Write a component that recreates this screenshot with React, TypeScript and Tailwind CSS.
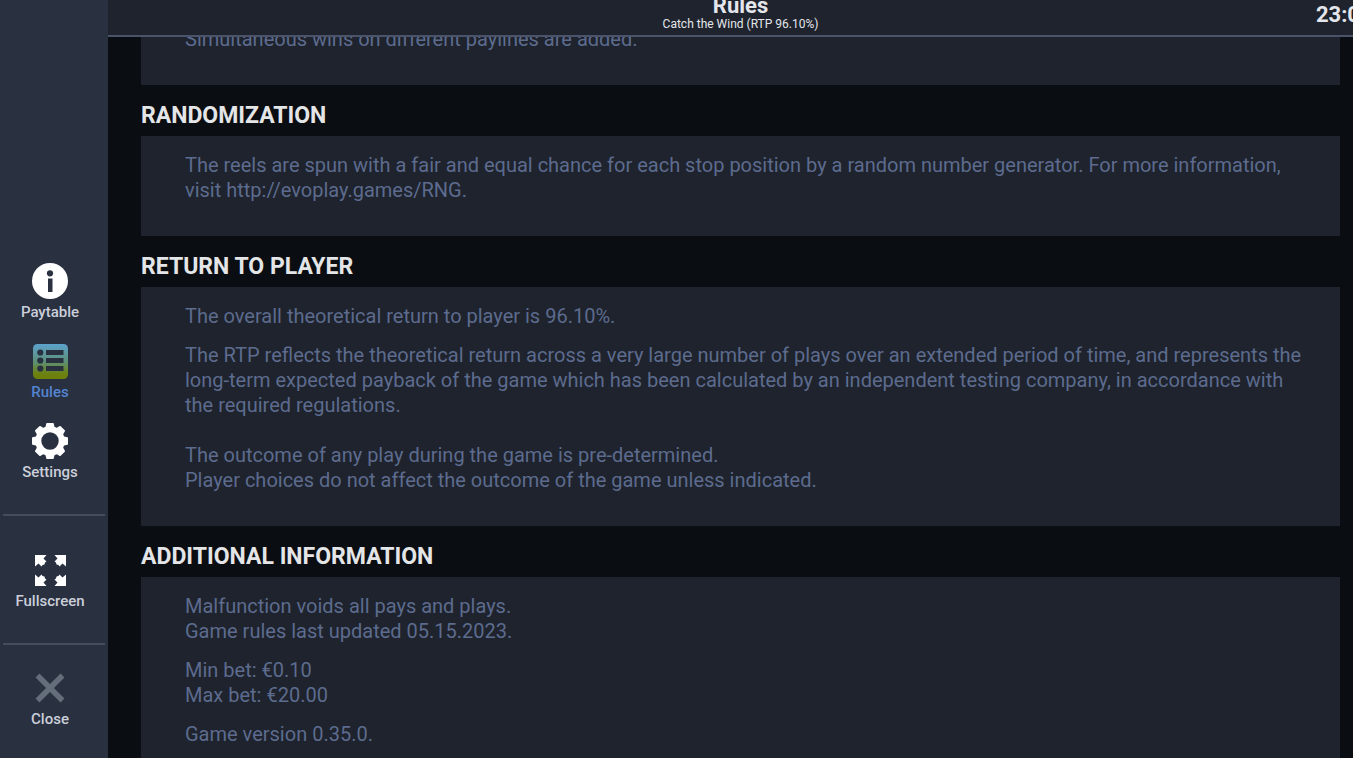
import type { ReactNode } from "react";

const InfoIcon = () => (
    <svg viewBox="0 0 36 36" className="size-9" aria-hidden="true">
        <circle cx="18" cy="18" r="18" fill="#fff" />
        <circle cx="18" cy="10.3" r="3.1" fill="#293040" />
        <rect x="16" y="15.5" width="4.5" height="13.5" fill="#293040" />
    </svg>
);

const RulesIcon = () => (
    <svg viewBox="0 0 36 36" className="size-9" aria-hidden="true">
        <defs>
            <linearGradient id="rules-fill" x1="0" y1="0" x2="0" y2="1">
                <stop offset="0" stopColor="#5ba3cd" />
                <stop offset="0.5" stopColor="#5d8f77" />
                <stop offset="0.85" stopColor="#6c8210" />
                <stop offset="1" stopColor="#6c8008" />
            </linearGradient>
        </defs>
        <rect x="1" y="1" width="35" height="35" rx="4.5" fill="url(#rules-fill)" />
        {[9.5, 17.5, 25.5].map((y) => (
            <g key={y} fill="#293040">
                <circle cx="8.3" cy={y} r="3.1" />
                <rect x="14" y={y - 2.5} width="17.5" height="5" />
            </g>
        ))}
    </svg>
);

const GEAR_ANGLES = [0, 45, 90, 135, 180, 225, 270, 315];

const GearIcon = () => (
    <svg viewBox="0 0 36 36" className="size-9" aria-hidden="true">
        {GEAR_ANGLES.map((angle) => (
            <path
                key={angle}
                d="M12.4 8 L14.3 0.6 Q14.5 0 15.1 0 H20.9 Q21.5 0 21.7 0.6 L23.6 8 Z"
                fill="#fff"
                transform={`rotate(${angle} 18 18)`}
            />
        ))}
        <circle cx="18" cy="18" r="11.7" fill="none" stroke="#fff" strokeWidth="6" />
    </svg>
);

const FullscreenIcon = () => (
    <svg viewBox="0 0 36 36" className="size-9" aria-hidden="true">
        {[0, 90, 180, 270].map((angle) => (
            <path
                key={angle}
                d="M3 3 H14.5 L11.5 6.5 L14.5 9.5 L13 10.5 L12.5 12.5 L10.5 13 L9.5 14.5 L6.5 11.5 L3 14.5 Z"
                fill="#fff"
                transform={`rotate(${angle} 18.5 18.5)`}
            />
        ))}
    </svg>
);

const CloseIcon = () => (
    <svg viewBox="0 0 36 36" className="size-9" aria-hidden="true">
        <path d="M5.5 5.5 L30.5 30.5 M30.5 5.5 L5.5 30.5" stroke="#636e7a" strokeWidth="5.5" />
    </svg>
);

interface NavItemProps {
    label: string;
    icon: ReactNode;
    active?: boolean;
}

const NavItem = ({ label, icon, active }: NavItemProps) => (
    <button
        type="button"
        aria-current={active ? "page" : undefined}
        className={`flex flex-col items-center gap-1 pr-2 w-full text-[15px] leading-[18px] font-medium cursor-pointer ${
            active ? "text-[#5484d2]" : "text-[#cbcfda]"
        }`}
    >
        {icon}
        {label}
    </button>
);

interface SectionProps {
    title?: string;
    children: ReactNode;
}

const Section = ({ title, children }: SectionProps) => (
    <section>
        {title && <h2 className="pt-[19px] pb-2 text-[23px] leading-6 font-bold text-[#e4e5e7]">{title}</h2>}
        <div className={`flex flex-col gap-[14px] pl-11 pr-4 pb-[33px] bg-[#1e232d] ${title ? "pt-[17px]" : ""}`}>
            {children}
        </div>
    </section>
);

export default function App() {
    return (
        <div className="flex h-screen overflow-hidden bg-[#0a0d11] font-[Roboto,sans-serif]">
            <nav className="flex flex-col justify-end w-27 shrink-0 bg-[#293040]">
                <div className="flex flex-col gap-[22px] pb-[33px]">
                    <NavItem label="Paytable" icon={<InfoIcon />} />
                    <NavItem label="Rules" icon={<RulesIcon />} active />
                    <NavItem label="Settings" icon={<GearIcon />} />
                </div>
                <div className="mx-[3px] border-y-2 border-[#454c5c] pt-9 pb-[33px]">
                    <NavItem label="Fullscreen" icon={<FullscreenIcon />} />
                </div>
                <div className="pt-[25px] pb-[30px]">
                    <NavItem label="Close" icon={<CloseIcon />} />
                </div>
            </nav>

            <div className="flex flex-col flex-1 min-w-0">
                <header className="grid grid-cols-[1fr_auto_1fr] content-end items-end h-[37px] shrink-0 pl-8 pr-3 border-b-2 border-[#4a5369] bg-[#1e232d] text-[#e4e6ec]">
                    <div className="col-start-2 text-center">
                        <h1 className="text-[22px] leading-[22px] font-bold">Rules</h1>
                        <p className="pb-1 text-xs leading-[14px]">Catch the Wind (RTP 96.10%)</p>
                    </div>
                    <time className="justify-self-end -mr-[19px] pb-2 text-[22px] leading-6 font-bold">23:0</time>
                </header>

                <main className="flex-1 min-h-0 overflow-hidden pl-[33px] pr-[13px] text-[20px] leading-[25px] text-[#5d6b8e]">
                    <div className="-mt-[10px]">
                        <Section>
                            <p>Simultaneous wins on different paylines are added.</p>
                        </Section>
                        <Section title="RANDOMIZATION">
                            <p>
                                The reels are spun with a fair and equal chance for each stop position by a random number generator. For more information,
                                <br />
                                visit http://evoplay.games/RNG.
                            </p>
                        </Section>
                        <Section title="RETURN TO PLAYER">
                            <p>The overall theoretical return to player is 96.10%.</p>
                            <p>
                                The RTP reflects the theoretical return across a very large number of plays over an extended period of time, and represents the
                                <br />
                                long-term expected payback of the game which has been calculated by an independent testing company, in accordance with
                                <br />
                                the required regulations.
                                <br />
                                <br />
                                The outcome of any play during the game is pre-determined.
                                <br />
                                Player choices do not affect the outcome of the game unless indicated.
                            </p>
                        </Section>
                        <Section title="ADDITIONAL INFORMATION">
                            <p>
                                Malfunction voids all pays and plays.
                                <br />
                                Game rules last updated 05.15.2023.
                            </p>
                            <p>
                                Min bet: €0.10
                                <br />
                                Max bet: €20.00
                            </p>
                            <p>Game version 0.35.0.</p>
                        </Section>
                    </div>
                </main>
            </div>
        </div>
    );
}
